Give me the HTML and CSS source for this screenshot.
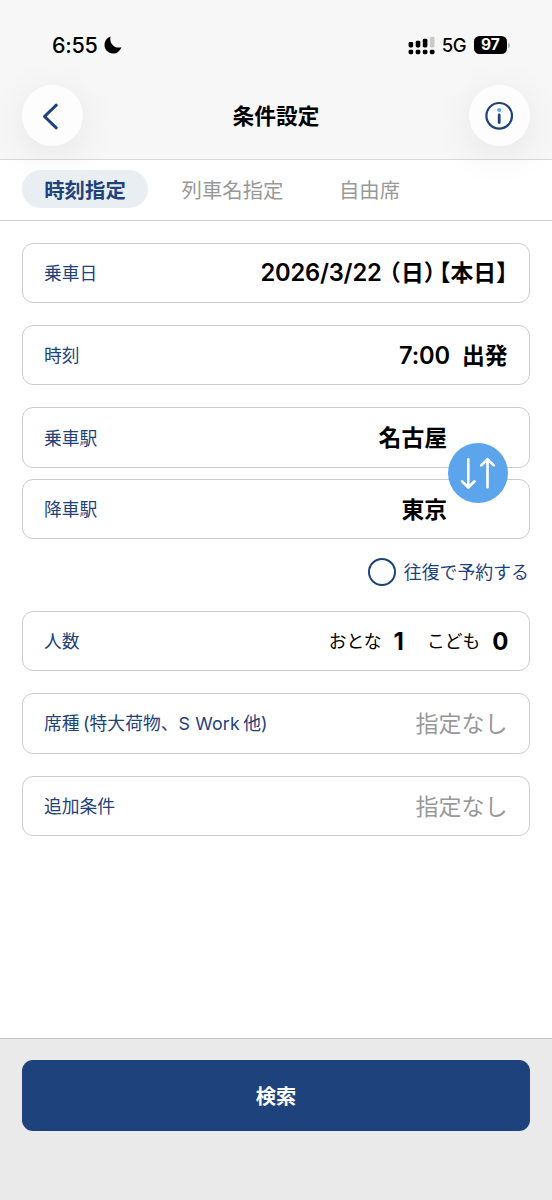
FILE: index.html
```html
<!DOCTYPE html>
<html lang="ja">
<head>
<meta charset="utf-8">
<title>条件設定</title>
<link rel="stylesheet" href="styles.css">
</head>
<body>
<div class="app">
  <header class="header">
    <div class="status">
      <div class="status-left">
        <span class="clock">6:55</span>
        <svg class="moon" width="18" height="18" viewBox="0 0 18 18"><path d="M6.600.4C5 6.600 9.800 13.200 17.400 11.200 15.800 15.300 12.800 17.500 9 17.500 4.300 17.500.5 13.800.5 9 .5 5 2.800 1.700 6.600.4Z"/></svg>
      </div>
      <div class="status-right">
        <svg width="27" height="19" viewBox="0 0 27 19">
          <rect x=".6" y="6" width="4.600" height="5.400" rx="1.400"/>
          <rect x="7.700" y="4.800" width="4.600" height="6.600" rx="1.400"/>
          <rect x="14.800" y="2.800" width="4.600" height="8.600" rx="1.400"/>
          <rect x="21.900" y=".8" width="4.600" height="10.600" rx="1.400" fill="#c9c9c9"/>
          <rect x=".6" y="13.800" width="4.600" height="4.400" rx="1.400"/>
          <rect x="7.700" y="13.800" width="4.600" height="4.400" rx="1.400"/>
          <rect x="14.800" y="13.800" width="4.600" height="4.400" rx="1.400"/>
          <rect x="21.900" y="13.800" width="4.600" height="4.400" rx="1.400"/>
        </svg>
        <span class="network">5G</span>
        <span class="battery">97</span>
        <span class="battery-tip"></span>
      </div>
    </div>
    <div class="nav">
      <button class="round" aria-label="戻る">
        <svg width="60" height="60" viewBox="0 0 60 60"><path d="M34.300 19.200 22.500 30.500 34.300 41.800" fill="none" stroke="#1e427c" stroke-width="3" stroke-linecap="round" stroke-linejoin="round"/></svg>
      </button>
      <h1 class="title">条件設定</h1>
      <button class="round" aria-label="情報">
        <svg width="60" height="60" viewBox="0 0 60 60"><circle cx="30.200" cy="29.800" r="12.800" fill="none" stroke="#1e427c" stroke-width="2.200"/><circle cx="30.200" cy="24" r="2.100" fill="#5ba6f0"/><path d="M30.200 29v7.600" stroke="#1e427c" stroke-width="2.800" stroke-linecap="round"/></svg>
      </button>
    </div>
  </header>
  <nav class="tabs">
    <span class="tab active">時刻指定</span>
    <span class="tab">列車名指定</span>
    <span class="tab">自由席</span>
  </nav>
  <main class="form">
    <div class="field"><span class="label">乗車日</span><span class="value date"><span class="num">2026/3/22</span><span>（日）</span><span>【本日】</span></span></div>
    <div class="field"><span class="label">時刻</span><span class="value"><span class="num time">7:00</span>出発</span></div>
    <div class="stations">
      <div class="field"><span class="label">乗車駅</span><span class="value">名古屋</span></div>
      <div class="field"><span class="label">降車駅</span><span class="value">東京</span></div>
      <button class="swap" aria-label="入れ替え">
        <svg width="60" height="60" viewBox="0 0 60 60" fill="none" stroke="#fff" stroke-width="2.600" stroke-linecap="round" stroke-linejoin="round"><path d="M20.300 16.300V44.300M14 38.300l6.300 6.200 6.300-6.200M39.500 44.300V16.300M33.200 22.400l6.300-6.200 6.300 6.200"/></svg>
      </button>
    </div>
    <div class="round-trip"><span class="radio"></span><span class="trip-text">往復で予約する</span></div>
    <div class="field"><span class="label">人数</span><span class="people"><span class="kind">おとな</span><b class="adult">1</b><span class="kind">こども</span><b class="child">0</b></span></div>
    <div class="field"><span class="label seat"><span>席種</span><span>(特大荷物、<span class="latin">S Work</span></span><span>他)</span></span><span class="none">指定なし</span></div>
    <div class="field"><span class="label">追加条件</span><span class="none">指定なし</span></div>
  </main>
  <footer class="footer"><button class="search">検索</button></footer>
</div>
</body>
</html>
```

FILE: styles.css
```css
* { box-sizing: border-box; }

body {
  margin: 0;
  background: #fff;
  color: #000;
  font-family: Inter, "Noto Sans CJK JP", sans-serif;
  text-spacing-trim: space-all;
}

button {
  border: 0;
  padding: 0;
  font-family: inherit;
}

svg { display: block; flex: none; }

.app {
  width: 552px;
  height: 1200px;
  display: flex;
  flex-direction: column;
  overflow: hidden;
}

.header {
  height: 160px;
  flex: none;
  background: #f7f7f7;
  border-bottom: 1px solid #d9d9d9;
}

.status {
  height: 85px;
  padding: 5px 42px 0 52px;
  display: flex;
  justify-content: space-between;
  align-items: center;
}

.status-left, .status-right { display: flex; align-items: center; }
.clock { font-size: 21.5px; font-weight: 550; letter-spacing: -.3px; }
.moon { margin-left: 7px; }
.network { margin-left: 7px; font-size: 18.5px; font-weight: 450; letter-spacing: -.5px; }

.battery {
  width: 33px;
  height: 18px;
  margin-left: 8px;
  border-radius: 5.5px;
  background: #000;
  color: #fff;
  font-size: 15.5px;
  font-weight: 700;
  line-height: 18px;
  text-align: center;
}

.battery-tip {
  width: 2px;
  height: 5px;
  margin-left: 1px;
  border-radius: 0 2px 2px 0;
  background: #b5b5b5;
}

.nav {
  padding: 0 22px;
  display: flex;
  justify-content: space-between;
  align-items: center;
}

.round {
  width: 61px;
  height: 61px;
  border-radius: 50%;
  background: #fdfdfd;
  box-shadow: 0 8px 40px rgba(0, 0, 0, .08);
}

.title {
  margin: 1px 0 0;
  font-size: 21.7px;
  line-height: 32px;
  font-weight: 600;
}

.tabs {
  height: 61px;
  flex: none;
  padding: 10px 22px;
  display: flex;
  border-bottom: 1px solid #d2d2d2;
}

.tab {
  height: 38px;
  font-size: 20.4px;
  line-height: 41px;
  color: #999;
  margin-left: 55.5px;
}

.tab.active {
  width: 126px;
  margin: 0 -22px 0 0;
  border-radius: 19px;
  background: #e9eef3;
  color: #1e427c;
  font-weight: 600;
  text-align: center;
}

.form {
  flex: 1;
  padding: 21.6px 22px 0;
  display: flex;
  flex-direction: column;
}

.field {
  height: 60.4px;
  flex: none;
  margin-bottom: 21.9px;
  padding: 0 21.5px 2px 21px;
  border: 1.4px solid #ccc;
  border-radius: 11px;
  display: flex;
  justify-content: space-between;
  align-items: center;
}

.label { font-size: 17.8px; color: #1e427c; white-space: nowrap; }
.value { font-size: 22.8px; font-weight: 600; white-space: nowrap; }
.num { font-size: 23.7px; letter-spacing: -.2px; }
.time { margin-right: 12px; }

/* Half-width brackets keep the date compact. */
.date {
  display: flex;
  align-items: baseline;
  gap: 4px;
  font-feature-settings: "halt";
}

.date .num { margin-right: 4px; }

.stations { position: relative; }
.stations .field { margin-bottom: 11px; padding-right: 82px; padding-bottom: 1px; }

.swap {
  position: absolute;
  top: 36px;
  right: 22px;
  width: 60px;
  height: 60px;
  border-radius: 50%;
  background: #5ca5ed;
}

.round-trip {
  height: 45px;
  margin: 0 1px 16px 0;
  display: flex;
  align-items: center;
  justify-content: flex-end;
}

.radio {
  width: 28px;
  height: 28px;
  margin-right: 8px;
  border: 2.2px solid #1e427c;
  border-radius: 50%;
}

.trip-text { font-size: 17.9px; line-height: 26px; padding-top: 2px; color: #1e427c; }

.people { display: flex; align-items: center; }
.people b { font-size: 24px; font-weight: 650; line-height: 28px; margin-top: 3px; }
.kind { font-size: 17.8px; }
.people .adult { margin-left: 12px; margin-right: 23px; }
.people .child { margin-left: 12px; margin-right: -1px; }

.seat { display: flex; gap: 3.5px; }
.latin { letter-spacing: .15px; }
.none { font-size: 23px; color: #999; }

.footer {
  height: 162px;
  flex: none;
  padding: 21px 22px 0;
  background: #eaeaea;
  border-top: 1px solid #c6c6c6;
}

.search {
  display: block;
  width: 508px;
  height: 71px;
  padding-bottom: 2px;
  border-radius: 11px;
  background: #1e427c;
  color: #fff;
  font-size: 20.3px;
  font-weight: 600;
}
```
